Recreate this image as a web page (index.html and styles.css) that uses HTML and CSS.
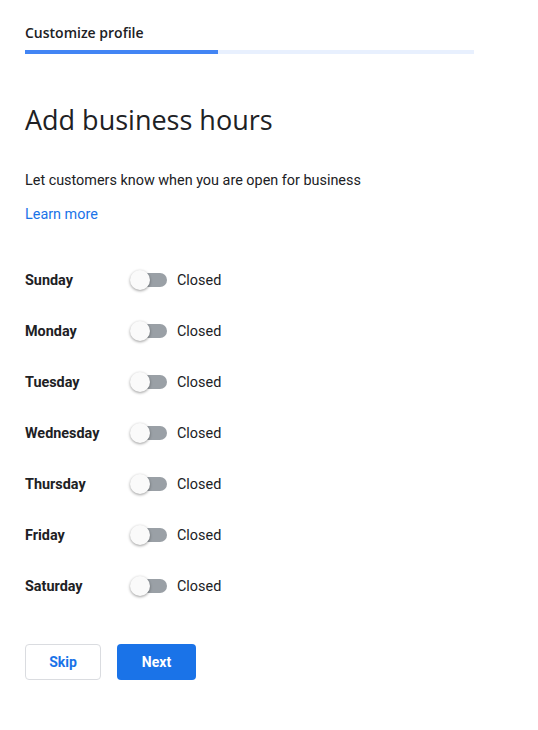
FILE: index.html
```html
<!DOCTYPE html>
<html lang="en">
<head>
  <meta charset="UTF-8" />
  <title>Add business hours</title>
  <link rel="stylesheet" href="styles.css">
</head>
<body>
  <div class="container">
    <div class="step-title">Customize profile</div>
    <div class="progress">
      <div class="progress-fill" style="width: 43%"></div>
    </div>

    <h1>Add business hours</h1>
    <p class="subtitle">Let customers know when you are open for business</p>
    <a class="learn-more" href="#">Learn more</a>

    <div class="days">
      <div class="day-row">
        <div class="day">Sunday</div>
        <div class="toggle"><span class="knob"></span></div>
        <div class="status">Closed</div>
      </div>
      <div class="day-row">
        <div class="day">Monday</div>
        <div class="toggle"><span class="knob"></span></div>
        <div class="status">Closed</div>
      </div>
      <div class="day-row">
        <div class="day">Tuesday</div>
        <div class="toggle"><span class="knob"></span></div>
        <div class="status">Closed</div>
      </div>
      <div class="day-row">
        <div class="day">Wednesday</div>
        <div class="toggle"><span class="knob"></span></div>
        <div class="status">Closed</div>
      </div>
      <div class="day-row">
        <div class="day">Thursday</div>
        <div class="toggle"><span class="knob"></span></div>
        <div class="status">Closed</div>
      </div>
      <div class="day-row">
        <div class="day">Friday</div>
        <div class="toggle"><span class="knob"></span></div>
        <div class="status">Closed</div>
      </div>
      <div class="day-row">
        <div class="day">Saturday</div>
        <div class="toggle"><span class="knob"></span></div>
        <div class="status">Closed</div>
      </div>
    </div>

    <div class="actions">
      <button class="btn btn-skip">Skip</button>
      <button class="btn btn-next">Next</button>
    </div>
  </div>
</body>
</html>
```

FILE: styles.css
```css
* {
  margin: 0;
  padding: 0;
  box-sizing: border-box;
}
body {
  background: #ffffff;
  font-family: Roboto, 'Liberation Sans', sans-serif;
  color: #202124;
}
.container {
  width: 449px;
  margin-left: 25px;
  padding-top: 24px;
}
.step-title {
  font-family: 'Open Sans', Roboto, sans-serif;
  font-size: 14px;
  font-weight: 600;
  line-height: 18px;
}
.progress {
  margin-top: 8px;
  height: 4px;
  background: #e8f0fe;
}
.progress-fill {
  height: 100%;
  background: #4285f4;
}
h1 {
  font-family: 'Open Sans', Roboto, sans-serif;
  font-weight: 400;
  font-size: 27px;
  line-height: 36px;
  margin-top: 48px;
}
.subtitle {
  font-size: 14.4px;
  line-height: 20px;
  margin-top: 33px;
}
.learn-more {
  display: inline-block;
  margin-top: 14px;
  font-size: 14.4px;
  line-height: 20px;
  color: #1a73e8;
  text-decoration: none;
}
.days {
  margin-top: 43px;
  display: flex;
  flex-direction: column;
  gap: 27px;
}
.day-row {
  display: flex;
  align-items: center;
  height: 24px;
}
.day {
  width: 105px;
  font-size: 14.4px;
  font-weight: 700;
}
.toggle {
  position: relative;
  width: 36px;
  height: 14px;
  border-radius: 7px;
  background: #9aa0a6;
  margin-left: 1px;
}
.knob {
  position: absolute;
  left: -1px;
  top: -3px;
  width: 20px;
  height: 20px;
  border-radius: 50%;
  background: #fafafa;
  box-shadow: 0 1px 3px rgba(0,0,0,0.4);
}
.status {
  margin-left: 10px;
  font-size: 14.4px;
}
.actions {
  margin-top: 46px;
  display: flex;
  gap: 16px;
}
.btn {
  height: 36px;
  border-radius: 4px;
  font-family: Roboto, sans-serif;
  font-size: 14px;
  font-weight: 700;
  cursor: pointer;
}
.btn-skip {
  width: 76px;
  background: #ffffff;
  color: #1a73e8;
  border: 1px solid #dadce0;
}
.btn-next {
  width: 79px;
  background: #1a73e8;
  color: #ffffff;
  border: none;
}
```
